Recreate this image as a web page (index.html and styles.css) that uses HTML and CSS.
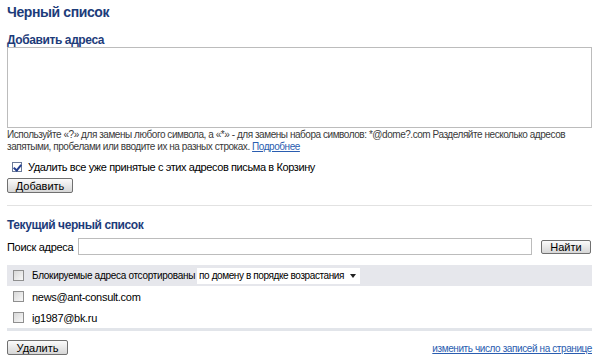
FILE: index.html
```
<!DOCTYPE html>
<html lang="ru">

<head>
    <meta charset="UTF-8">
    <meta name="viewport" content="width=device-width, initial-scale=1.0">
    <title>Черный список</title>
    <link rel="stylesheet" href="styles.css">
</head>

<body>
    <div class="page">
        <h1>Черный список</h1>

        <form class="add-form">
            <label class="section-title" for="addresses">Добавить адреса</label>
            <textarea id="addresses" name="addresses"></textarea>
            <p class="hint">Используйте «?» для замены любого символа, а «*» - для замены набора символов: *@dome?.com Разделяйте несколько адресов запятыми, пробелами или вводите их на разных строках. <a href="#">Подробнее</a></p>
            <label class="check-line">
                <input type="checkbox" class="box" checked>
                <span>Удалить все уже принятые с этих адресов письма в Корзину</span>
            </label>
            <button type="submit" class="btn btn-add">Добавить</button>
        </form>

        <div class="list-block">
            <h2 class="section-title">Текущий черный список</h2>
            <form class="search">
                <label for="search">Поиск адреса</label>
                <input type="text" id="search" name="search">
                <button type="submit" class="btn btn-find">Найти</button>
            </form>

            <div class="list-head">
                <input type="checkbox" class="box">
                <span>Блокируемые адреса отсортированы</span>
                <div class="select">по домену в порядке возрастания <span class="arrow"></span></div>
            </div>
            <ul class="list">
                <li><input type="checkbox" class="box"> news@ant-consult.com</li>
                <li><input type="checkbox" class="box"> ig1987@bk.ru</li>
            </ul>

            <div class="list-foot">
                <button class="btn btn-del">Удалить</button>
                <a href="#">изменить число записей на странице</a>
            </div>
        </div>
    </div>
</body>

</html>
```

FILE: styles.css
```
body {
    margin: 0;
    font-family: "Liberation Sans", Arial, sans-serif;
    font-size: 11px;
    color: #000;
    background-color: #fff;
}

.page {
    width: 585px;
    padding: 4px 8px 0 7px;
}

h1 {
    margin: 0;
    font-size: 14px;
    line-height: 17px;
    letter-spacing: -0.4px;
    color: #1d3c7a;
}

.section-title {
    display: block;
    margin: 0;
    font-size: 12px;
    font-weight: bold;
    line-height: 13px;
    letter-spacing: -0.4px;
    color: #1d3c7a;
}

.add-form {
    margin-top: 13px;
    display: flex;
    flex-direction: column;
    align-items: flex-start;
}

textarea {
    box-sizing: border-box;
    width: 585px;
    height: 81px;
    margin: 0;
    border: 1px solid #bcbcbc;
    resize: none;
}

.hint {
    margin: 1px 0 0;
    font-size: 10px;
    line-height: 12px;
    letter-spacing: -0.45px;
    color: #3a3a3a;
}

a {
    color: #2a5db0;
}

.box {
    appearance: none;
    position: relative;
    box-sizing: border-box;
    flex: none;
    width: 11px;
    height: 11px;
    margin: 0 8px 0 0;
    border: 1px solid #8f8f8f;
    background: linear-gradient(135deg, #d8d8d8, #f8f8f8);
}

.box:checked {
    background: #fff;
    border-color: #6b7a99;
}

.box:checked::after {
    content: "";
    position: absolute;
    left: 2px;
    top: 0;
    width: 3px;
    height: 6px;
    border: solid #243f8f;
    border-width: 0 2px 2px 0;
    transform: rotate(40deg);
}

.check-line {
    display: flex;
    align-items: center;
    margin-top: 8px;
    padding-left: 5px;
    letter-spacing: -0.4px;
}

.check-line .box {
    width: 10px;
    height: 10px;
    margin-right: 6px;
}

.btn {
    box-sizing: border-box;
    padding: 0;
    height: 15px;
    font-family: "Liberation Sans", Arial, sans-serif;
    font-size: 11px;
    line-height: 12px;
    color: #000;
    border: 1px solid #707070;
    border-radius: 2px;
    background: linear-gradient(#fbfbfb, #d6d6d6);
}

.btn-add {
    margin-top: 5px;
    width: 66px;
}

.btn-find {
    width: 50px;
    height: 14px;
    margin-left: 9px;
}

.btn-del {
    width: 61px;
}

.list-block {
    margin-top: 12px;
    border-top: 1px solid #e2e2e2;
    padding-top: 13px;
}

.search {
    display: flex;
    align-items: center;
    margin-top: 6px;
    letter-spacing: -0.3px;
}

.search label {
    width: 71px;
}

.search input {
    box-sizing: border-box;
    width: 454px;
    height: 17px;
    margin: 0;
    border: 1px solid #bcbcbc;
}

.list-head {
    display: flex;
    align-items: center;
    margin-top: 10px;
    height: 21px;
    padding-left: 6px;
    background-color: #e6e7ec;
    font-size: 10px;
    letter-spacing: -0.3px;
}

.select {
    margin-left: 2px;
    display: flex;
    align-items: center;
    height: 16px;
    padding: 0 4px 0 2px;
    background-color: #fff;
    letter-spacing: -0.4px;
}

.arrow {
    margin-left: 6px;
    border-left: 3px solid transparent;
    border-right: 3px solid transparent;
    border-top: 4px solid #222;
}

.list {
    margin: 0;
    padding: 0;
    list-style: none;
    border-bottom: 3px solid #e2e5ea;
}

.list li {
    display: flex;
    align-items: center;
    height: 21px;
    padding-left: 6px;
    letter-spacing: -0.3px;
}

.list-foot {
    display: flex;
    justify-content: space-between;
    align-items: flex-end;
    margin-top: 9px;
}

.list-foot a {
    font-size: 10px;
    line-height: 12px;
    letter-spacing: -0.4px;
}
```
